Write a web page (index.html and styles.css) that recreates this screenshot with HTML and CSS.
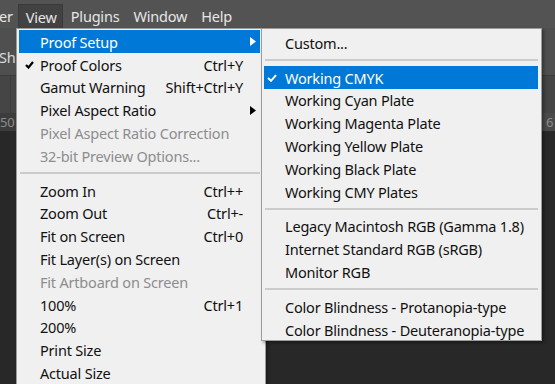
FILE: index.html
```html
<!DOCTYPE html>
<html lang="en">
<head>
    <meta charset="UTF-8">
    <title>View menu - Proof Setup</title>
    <link rel="stylesheet" href="styles.css">
</head>
<body>
    <div class="menubar">
        <span class="menubar-item cut">er</span>
        <span class="menubar-item open">View</span>
        <span class="menubar-item">Plugins</span>
        <span class="menubar-item">Window</span>
        <span class="menubar-item">Help</span>
    </div>
    <div class="options-bar"><span class="options-text">Sh</span></div>
    <div class="tabs-bar"><span class="tab-edge"></span></div>
    <div class="ruler">
        <span>50</span>
        <span class="ruler-right">6</span>
    </div>
    <div class="canvas"></div>

    <!-- View menu -->
    <div class="menu main-menu">
        <div class="item active">
            <span class="mark"></span>
            <span class="label">Proof Setup</span>
            <span class="arrow"><svg width="6" height="9" viewBox="0 0 6 9"><path d="M0 0 L6 4.5 L0 9 Z" fill="#fff"/></svg></span>
        </div>
        <div class="item">
            <span class="mark"><svg width="9" height="8" viewBox="0 0 9 8"><path d="M1 4 L3.5 6.5 L8 1" fill="none" stroke="#000" stroke-width="2.2"/></svg></span>
            <span class="label">Proof Colors</span>
            <span class="shortcut">Ctrl+Y</span>
            <span class="arrow"></span>
        </div>
        <div class="item">
            <span class="mark"></span>
            <span class="label">Gamut Warning</span>
            <span class="shortcut">Shift+Ctrl+Y</span>
            <span class="arrow"></span>
        </div>
        <div class="item">
            <span class="mark"></span>
            <span class="label">Pixel Aspect Ratio</span>
            <span class="arrow"><svg width="6" height="9" viewBox="0 0 6 9"><path d="M0 0 L6 4.5 L0 9 Z" fill="#000"/></svg></span>
        </div>
        <div class="item disabled">
            <span class="mark"></span>
            <span class="label">Pixel Aspect Ratio Correction</span>
        </div>
        <div class="item disabled">
            <span class="mark"></span>
            <span class="label">32-bit Preview Options...</span>
        </div>
        <div class="separator"></div>
        <div class="item">
            <span class="mark"></span>
            <span class="label">Zoom In</span>
            <span class="shortcut">Ctrl++</span>
            <span class="arrow"></span>
        </div>
        <div class="item">
            <span class="mark"></span>
            <span class="label">Zoom Out</span>
            <span class="shortcut">Ctrl+-</span>
            <span class="arrow"></span>
        </div>
        <div class="item">
            <span class="mark"></span>
            <span class="label">Fit on Screen</span>
            <span class="shortcut">Ctrl+0</span>
            <span class="arrow"></span>
        </div>
        <div class="item">
            <span class="mark"></span>
            <span class="label">Fit Layer(s) on Screen</span>
        </div>
        <div class="item disabled">
            <span class="mark"></span>
            <span class="label">Fit Artboard on Screen</span>
        </div>
        <div class="item">
            <span class="mark"></span>
            <span class="label">100%</span>
            <span class="shortcut">Ctrl+1</span>
            <span class="arrow"></span>
        </div>
        <div class="item">
            <span class="mark"></span>
            <span class="label">200%</span>
        </div>
        <div class="item">
            <span class="mark"></span>
            <span class="label">Print Size</span>
        </div>
        <div class="item">
            <span class="mark"></span>
            <span class="label">Actual Size</span>
        </div>
    </div>

    <!-- Proof Setup submenu -->
    <div class="menu sub-menu">
        <div class="item">
            <span class="mark"></span>
            <span class="label">Custom...</span>
        </div>
        <div class="separator"></div>
        <div class="item active">
            <span class="mark"><svg width="10" height="8" viewBox="0 0 10 8"><path d="M1 4 L4 6.8 L9 1.2" fill="none" stroke="#fff" stroke-width="2"/></svg></span>
            <span class="label">Working CMYK</span>
        </div>
        <div class="item">
            <span class="mark"></span>
            <span class="label">Working Cyan Plate</span>
        </div>
        <div class="item">
            <span class="mark"></span>
            <span class="label">Working Magenta Plate</span>
        </div>
        <div class="item">
            <span class="mark"></span>
            <span class="label">Working Yellow Plate</span>
        </div>
        <div class="item">
            <span class="mark"></span>
            <span class="label">Working Black Plate</span>
        </div>
        <div class="item">
            <span class="mark"></span>
            <span class="label">Working CMY Plates</span>
        </div>
        <div class="separator"></div>
        <div class="item">
            <span class="mark"></span>
            <span class="label">Legacy Macintosh RGB (Gamma 1.8)</span>
        </div>
        <div class="item">
            <span class="mark"></span>
            <span class="label">Internet Standard RGB (sRGB)</span>
        </div>
        <div class="item">
            <span class="mark"></span>
            <span class="label">Monitor RGB</span>
        </div>
        <div class="separator"></div>
        <div class="item">
            <span class="mark"></span>
            <span class="label">Color Blindness - Protanopia-type</span>
        </div>
        <div class="item">
            <span class="mark"></span>
            <span class="label">Color Blindness - Deuteranopia-type</span>
        </div>
    </div>
</body>
</html>
```

FILE: styles.css
```css
body {
    margin: 0;
    width: 555px;
    height: 384px;
    overflow: hidden;
    position: relative;
    background-color: #282828;
    font-family: 'Noto Sans', 'Open Sans', sans-serif;
    font-size: 14.5px;
    letter-spacing: -0.2px;
}

.menubar {
    height: 28px;
    background-color: #535353;
    color: #e6e6e6;
    display: flex;
    align-items: flex-end;
}

.menubar-item {
    height: 24px;
    line-height: 24px;
    padding: 0 7px;
    box-sizing: border-box;
}

.menubar-item.cut {
    padding: 0 5px 0 0;
    margin-left: -1px;
}

.menubar-item.open {
    background-color: #424242;
    border: 1px solid #3a3a3a;
    border-bottom: none;
    padding: 0 7px;
    width: 45px;
    margin-right: 1px;
}

.options-bar {
    height: 47px;
    background-color: #4f4f4f;
    color: #d8d8d8;
    display: flex;
    align-items: center;
    border-bottom: 1px solid #3a3a3a;
}

.options-text {
    margin-top: 10px;
    margin-left: -1px;
}

.tabs-bar {
    height: 37px;
    background-color: #454545;
    display: flex;
}

.tab-edge {
    width: 10px;
    border-right: 1px solid #3c3c3c;
}

.ruler {
    height: 18px;
    background-color: #3c3c3c;
    color: #8c8c8c;
    font-size: 13px;
    line-height: 18px;
    display: flex;
    justify-content: space-between;
}

.ruler-right {
    width: 9px;
    padding-left: 4px;
    background-color: #4a4a4a;
}

.canvas {
    height: 253px;
    background-color: #282828;
}

/* menus */
.menu {
    position: absolute;
    background-color: #f0f0f0;
    border: 1px solid #9c9c9c;
    color: #111;
    box-shadow: 2px 2px 3px rgba(0, 0, 0, 0.35);
}

.main-menu {
    left: 16px;
    top: 28px;
    width: 250px;
    height: 356px;
    padding: 1px 5px 0 2px;
    box-sizing: border-box;
    border-bottom: none;
    overflow: hidden;
}

.sub-menu {
    left: 261px;
    top: 28px;
    width: 281px;
    height: 313px;
    padding: 2px 3px 3px 2px;
    box-sizing: border-box;
}

.item {
    display: flex;
    align-items: center;
    height: 22.8px;
    padding-top: 1px;
    box-sizing: border-box;
    white-space: nowrap;
}

.item.active {
    background-color: #0078d7;
    color: #fff;
}

.item.disabled {
    color: #8d8d8d;
}

.mark {
    width: 21px;
    flex-shrink: 0;
    display: flex;
    align-items: center;
    padding-left: 6px;
    box-sizing: border-box;
}

.sub-menu .mark {
    padding-left: 3px;
}

.label {
    flex: 1;
}

.shortcut {
    text-align: right;
}

.arrow {
    width: 17px;
    flex-shrink: 0;
    display: flex;
    align-items: center;
    padding-left: 7px;
    box-sizing: border-box;
}

.separator {
    height: 2px;
    background-color: #cbcbcb;
    margin: 5px 0 5px 1px;
}
```
